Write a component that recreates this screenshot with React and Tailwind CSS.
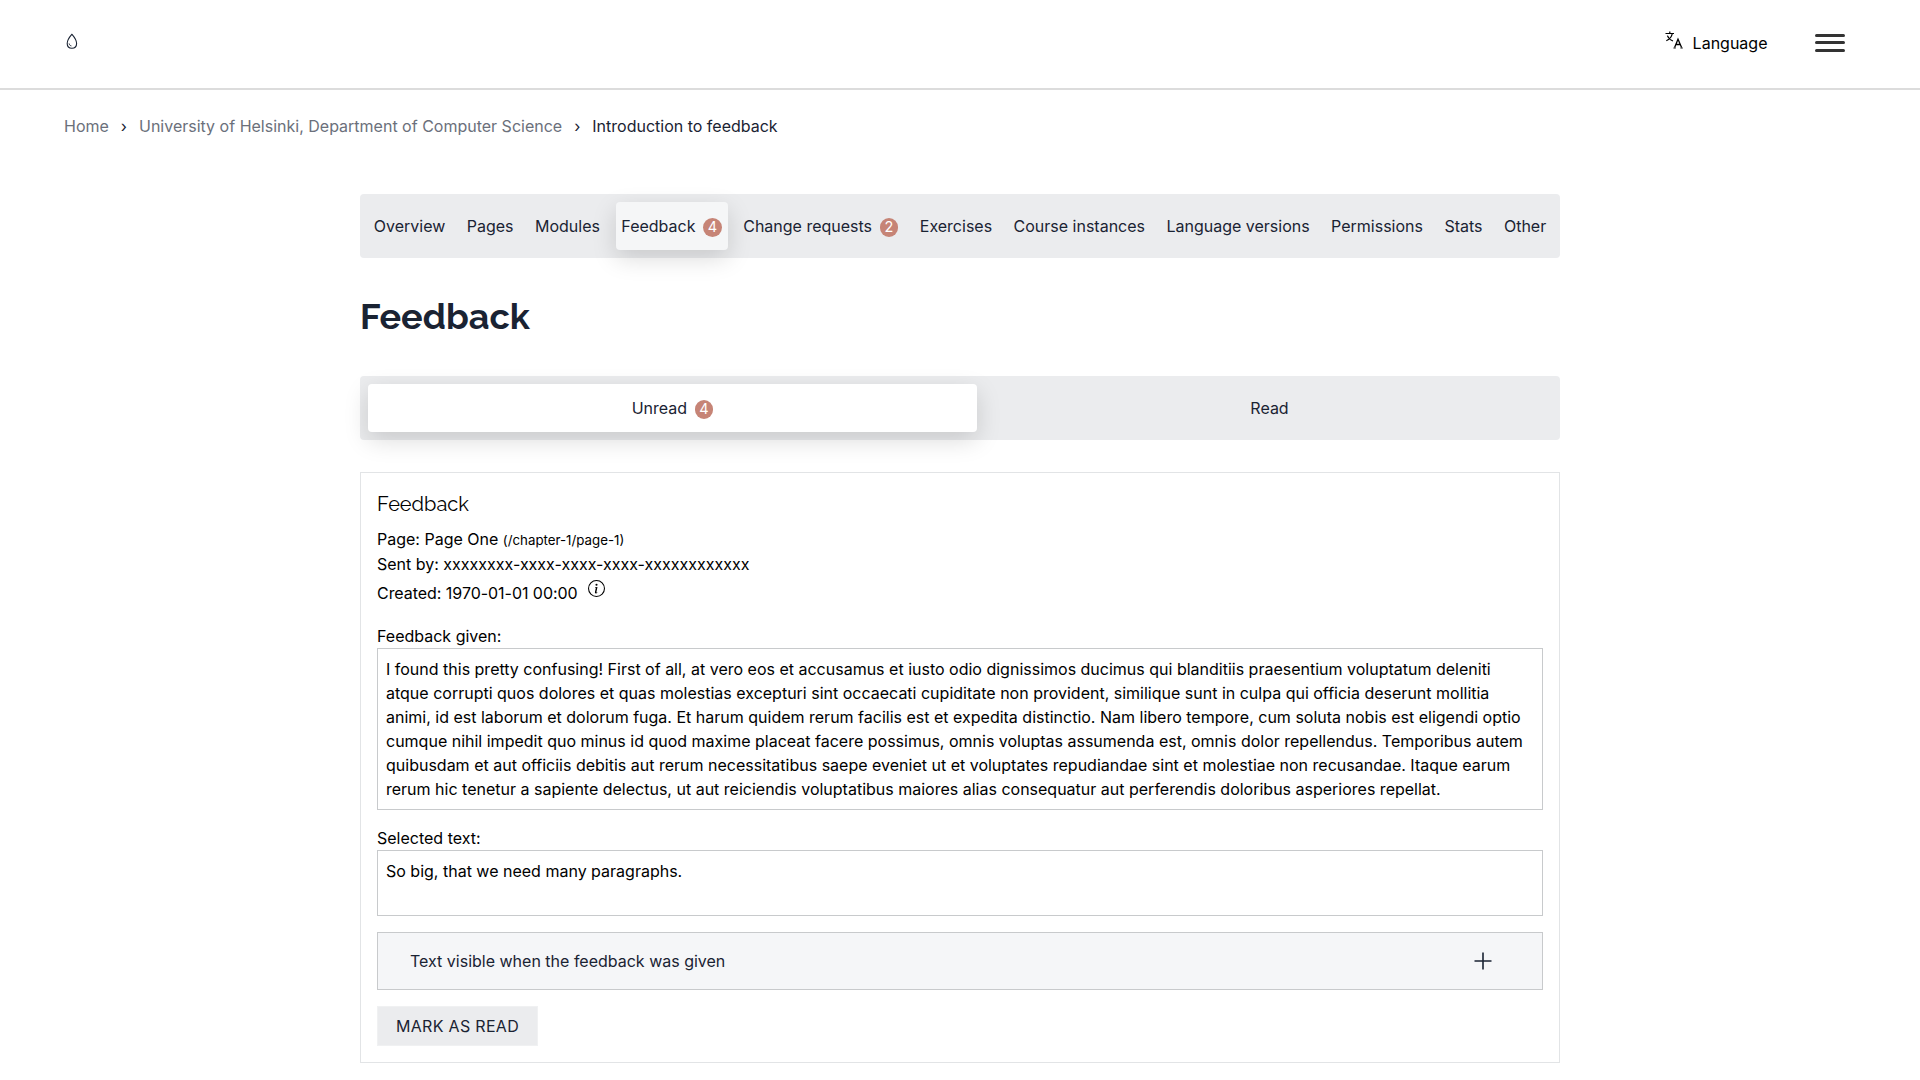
import React from "react";
import { BsInfoCircle } from "react-icons/bs";

const courseTabs = [
  { label: "Overview" },
  { label: "Pages" },
  { label: "Modules" },
  { label: "Feedback", count: 4, active: true },
  { label: "Change requests", count: 2 },
  { label: "Exercises" },
  { label: "Course instances" },
  { label: "Language versions" },
  { label: "Permissions" },
  { label: "Stats" },
  { label: "Other" },
];

const feedbackLines = [
  "I found this pretty confusing! First of all, at vero eos et accusamus et iusto odio dignissimos ducimus qui blanditiis praesentium voluptatum deleniti",
  "atque corrupti quos dolores et quas molestias excepturi sint occaecati cupiditate non provident, similique sunt in culpa qui officia deserunt mollitia",
  "animi, id est laborum et dolorum fuga. Et harum quidem rerum facilis est et expedita distinctio. Nam libero tempore, cum soluta nobis est eligendi optio",
  "cumque nihil impedit quo minus id quod maxime placeat facere possimus, omnis voluptas assumenda est, omnis dolor repellendus. Temporibus autem",
  "quibusdam et aut officiis debitis aut rerum necessitatibus saepe eveniet ut et voluptates repudiandae sint et molestiae non recusandae. Itaque earum",
  "rerum hic tenetur a sapiente delectus, ut aut reiciendis voluptatibus maiores alias consequatur aut perferendis doloribus asperiores repellat.",
];

function Badge({ children }) {
  return (
    <span className="mt-0.5 ml-[7.5px] flex h-[19px] w-[18.8px] shrink-0 items-center justify-center rounded-full bg-[#c68476] text-[14.5px] leading-none text-white">
      {children}
    </span>
  );
}

function DropletIcon() {
  return (
    <svg className="mt-[33px]" width="16" height="17" viewBox="0 0 16 17" fill="none" stroke="#1a2333" strokeWidth="1.1" strokeLinecap="round">
      <path d="M7.9 1.3C6.6 2.8 3.2 6.6 3.2 10.6C3.2 13.6 5.2 15.3 7.9 15.3C10.6 15.3 12.6 13.6 12.6 10.6C12.6 6.6 9.2 2.8 7.9 1.3Z" />
      <path d="M5.2 10.9C5.4 11.9 6 12.6 7 12.8" strokeWidth="1" />
    </svg>
  );
}

function LanguageIcon() {
  return (
    <svg width="18" height="18" viewBox="0 0 18 18" fill="none" stroke="#000" strokeWidth="1.2">
      <path d="M0.5 2.5H9M4.8 0.5V2.5M7.3 2.7C6.6 5.8 4.4 8.6 1.3 9.8M2.4 4.6C3.4 7.2 5.4 9.1 8 10" />
      <path d="M9.6 16.6L13 8.2L16.6 16.6M10.8 13.5H15.3" strokeWidth="1.3" />
      <path d="M8.4 17H10.8M15.4 17H17.8" strokeWidth="0.9" />
    </svg>
  );
}

function Header() {
  return (
    <header className="flex h-[90px] items-start justify-between border-b-2 border-[#dcdcdc] pr-[75px] pl-16">
      <DropletIcon />
      <div className="flex">
        <div className="mt-[31px] flex">
          <LanguageIcon />
          <span className="ml-[9.5px] text-black">Language</span>
        </div>
        <div className="mt-[34px] ml-[47.5px] flex flex-col">
          <span className="h-[3px] w-[30px] rounded-sm bg-[#333]" />
          <span className="mt-1 h-[3px] w-[30px] rounded-sm bg-[#333]" />
          <span className="mt-[5px] h-[3px] w-[30px] rounded-sm bg-[#333]" />
        </div>
      </div>
    </header>
  );
}

export default function App() {
  return (
    <div className="h-[1080px] overflow-hidden bg-white font-['Inter',sans-serif] text-[16px] leading-6 text-[#1a2333]">
      <Header />
      <nav className="mt-6 flex px-16">
        <span className="text-[#6b707b]">Home</span>
        <span className="mx-3 text-[#1a2333]">›</span>
        <span className="text-[#6b707b]">University of Helsinki, Department of Computer Science</span>
        <span className="mx-3 text-[#1a2333]">›</span>
        <span>Introduction to feedback</span>
      </nav>

      <main className="mx-auto mt-14 w-[1200px]">
        <nav className="flex h-16 gap-[9.8px] rounded bg-[#ebecee] p-2">
          {courseTabs.map((tab) => (
            <div
              key={tab.label}
              className={
                "flex flex-auto items-center justify-center whitespace-nowrap rounded " +
                (tab.active ? "bg-[#f5f6f7] shadow-[0_8px_24px_rgba(0,0,0,0.15)]" : "")
              }
            >
              {tab.label}
              {tab.count && <Badge>{tab.count}</Badge>}
            </div>
          ))}
        </nav>

        <h1 className="mt-[35px] mb-[37px] font-['Raleway','Inter',sans-serif] text-[36px] leading-[46px] font-bold">Feedback</h1>

        <div className="flex h-16 rounded bg-[#ebecee] p-2">
          <div className="flex w-[609px] items-center justify-center rounded bg-white shadow-[0_8px_24px_rgba(0,0,0,0.15)]">
            Unread
            <Badge>4</Badge>
          </div>
          <div className="ml-2.5 flex flex-1 items-center justify-center">Read</div>
        </div>

        <section className="mt-8 h-[591px] border border-[#e2e4e6] p-4 text-black">
          <h2 className="mt-[3px] font-['Raleway','Inter',sans-serif] text-[20px] leading-6 font-normal">Feedback</h2>
          <p className="mt-[11px] leading-6">
            Page: Page One <span className="text-[13.3px]">(/chapter-1/page-1)</span>
          </p>
          <p className="leading-6">Sent by: xxxxxxxx-xxxx-xxxx-xxxx-xxxxxxxxxxxx</p>
          <div className="mt-[5px] flex">
            <span className="tracking-[-0.04px]">Created: 1970-01-01 00:00</span>
            <BsInfoCircle size={17} className="-mt-px ml-2.5" />
          </div>

          <p className="mt-[19px] leading-6">Feedback given:</p>
          <div className="h-[162px] border border-[#c8cacc] p-2">
            {feedbackLines.map((line) => (
              <p key={line} className="whitespace-nowrap">{line}</p>
            ))}
          </div>

          <p className="mt-4">Selected text:</p>
          <div className="h-[66px] border border-[#c8cacc] p-2">So big, that we need many paragraphs.</div>

          <div className="mt-4 flex h-[58px] items-center justify-between border border-[#c8cacc] bg-[#f5f6f8] pr-[50px] pl-8 text-[#1a2333]">
            <span>Text visible when the feedback was given</span>
            <svg width="18" height="18" viewBox="0 0 18 18" stroke="#1a2333" strokeWidth="1.6">
              <path d="M9 0.5V17.5M0.5 9H17.5" />
            </svg>
          </div>

          <button className="mt-4 flex h-10 w-[161px] items-center justify-center border border-[#f0f1f2] bg-[#ebecee] tracking-[0.32px] text-[#1a2333] uppercase">
            Mark as read
          </button>
        </section>
      </main>
    </div>
  );
}
